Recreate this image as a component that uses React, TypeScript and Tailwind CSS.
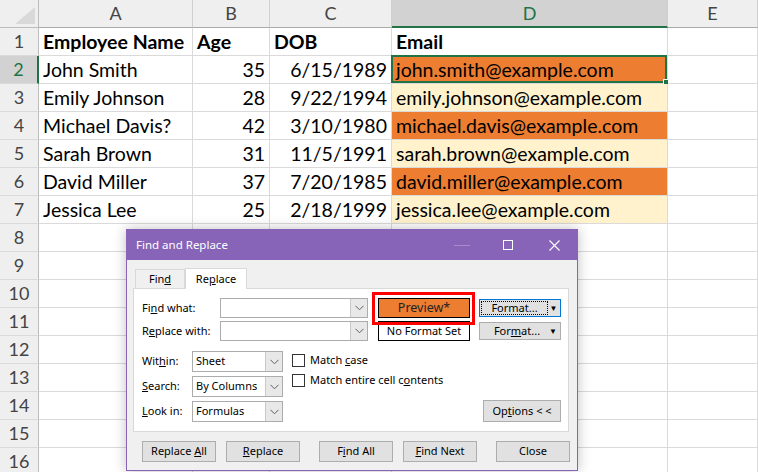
import React from 'react';

const COLS = ['A', 'B', 'C', 'D', 'E'];

const people = [
  { name: 'John Smith', age: '35', dob: '6/15/1989', email: 'john.smith@example.com', fill: 'bg-[#ed7d31]' },
  { name: 'Emily Johnson', age: '28', dob: '9/22/1994', email: 'emily.johnson@example.com', fill: 'bg-[#fff2cc]' },
  { name: 'Michael Davis?', age: '42', dob: '3/10/1980', email: 'michael.davis@example.com', fill: 'bg-[#ed7d31]' },
  { name: 'Sarah Brown', age: '31', dob: '11/5/1991', email: 'sarah.brown@example.com', fill: 'bg-[#fff2cc]' },
  { name: 'David Miller', age: '37', dob: '7/20/1985', email: 'david.miller@example.com', fill: 'bg-[#ed7d31]' },
  { name: 'Jessica Lee', age: '25', dob: '2/18/1999', email: 'jessica.lee@example.com', fill: 'bg-[#fff2cc]' },
];

const cell = 'border-r border-b border-[#dadada] flex items-center overflow-hidden whitespace-nowrap';

function RowHead({ n, active }: { n: number; active?: boolean }) {
  return (
    <div
      className={`flex items-center justify-center border-b border-[#dadada] text-[18px] ${
        active ? 'bg-[#d2d2d2] text-[#217346] border-r-2 border-r-[#217346]' : 'bg-[#efefef] text-[#444] border-r border-r-[#bdbdbd]'
      }`}
    >
      {n}
    </div>
  );
}

function Sheet() {
  return (
    <div className="grid grid-cols-[39px_154px_77px_122px_276px_90px] auto-rows-[28px] bg-white text-[19.5px] font-['Lato',sans-serif] text-black">
      {/* corner */}
      <div className="relative bg-[#efefef] border-r border-b border-[#bdbdbd]">
        <svg className="absolute right-[3px] bottom-[3px]" width="20" height="17" viewBox="0 0 20 17">
          <polygon points="0,17 20,17 20,0" fill="#d9d9d9" />
        </svg>
      </div>
      {COLS.map((c) => (
        <div
          key={c}
          className={`flex items-center justify-center border-r border-[#cfcfcf] text-[18px] ${
            c === 'D' ? 'bg-[#d2d2d2] text-[#217346] border-b-2 border-b-[#217346]' : 'bg-[#efefef] text-[#444] border-b border-b-[#ababab]'
          }`}
        >
          {c}
        </div>
      ))}

      <RowHead n={1} />
      <div className={`${cell} pl-[4px] font-bold`}>Employee Name</div>
      <div className={`${cell} pl-[4px] font-bold`}>Age</div>
      <div className={`${cell} pl-[4px] font-bold`}>DOB</div>
      <div className={`${cell} pl-[4px] font-bold`}>Email</div>
      <div className={cell} />

      {people.map((p, i) => (
        <React.Fragment key={p.name}>
          <RowHead n={i + 2} active={i === 0} />
          <div className={`${cell} pl-[4px]`}>{p.name}</div>
          <div className={`${cell} justify-end pr-[4px]`}>{p.age}</div>
          <div className={`${cell} justify-end pr-[4px]`}>{p.dob}</div>
          <div className={`${cell} ${p.fill} pl-[4px] relative overflow-visible`}>
            {p.email}
            {i === 0 && (
              <div className="absolute -left-[1px] -top-[1px] right-0 bottom-0 border-2 border-[#217346]">
                <div className="absolute -right-[4px] -bottom-[4px] w-[6px] h-[6px] bg-[#217346] border border-white" />
              </div>
            )}
          </div>
          <div className={cell} />
        </React.Fragment>
      ))}

      {Array.from({ length: 9 }, (_, i) => (
        <React.Fragment key={i}>
          <RowHead n={i + 8} />
          {COLS.map((c) => (
            <div key={c} className={cell} />
          ))}
        </React.Fragment>
      ))}
    </div>
  );
}

function Btn({ children, className = '' }: { children: React.ReactNode; className?: string }) {
  return (
    <div className={`h-[21px] w-[74px] flex items-center justify-center bg-[#e1e1e1] border border-[#adadad] ${className}`}>
      <span>{children}</span>
    </div>
  );
}

function Chevron() {
  return (
    <svg width="9" height="6" viewBox="0 0 9 6">
      <path d="M0.5 0.8 L4.5 4.8 L8.5 0.8" fill="none" stroke="#606060" strokeWidth="1" />
    </svg>
  );
}

function Combo({ value, w, h = 20 }: { value?: string; w: number; h?: number }) {
  return (
    <div className="flex bg-white border border-[#acacac]" style={{ width: w, height: h }}>
      <div className="flex-1 flex items-center pl-[3px]">{value}</div>
      <div className="w-[17px] flex items-center justify-center bg-[#e8e8e8] border-l border-[#c9c9c9]">
        <Chevron />
      </div>
    </div>
  );
}

function Check({ children }: { children: React.ReactNode }) {
  return (
    <div className="h-[20px] flex items-center gap-[5px]">
      <div className="w-[13px] h-[13px] bg-white border border-[#333]" />
      <span>{children}</span>
    </div>
  );
}

function Dialog() {
  return (
    <div className="absolute left-[126px] top-[229px] w-[452px] h-[242px] border border-[#8764b8] bg-[#f0f0f0] shadow-[0_0_12px_rgba(0,0,0,0.25)] font-['Noto_Sans',sans-serif] text-[11px] text-black flex flex-col">
      {/* title bar */}
      <div className="h-[30px] flex items-center bg-[#8764b8] text-white text-[11.5px] pl-[9px]">
        <span>Find and Replace</span>
        <div className="ml-auto flex h-full">
          <div className="w-[46px] flex items-center justify-center">
            <div className="w-[16px] h-px bg-[#a48fcb]" />
          </div>
          <div className="w-[46px] flex items-center justify-center">
            <div className="w-[10px] h-[10px] border border-white" />
          </div>
          <div className="w-[46px] flex items-center justify-center">
            <svg width="11" height="11" viewBox="0 0 11 11">
              <path d="M0.5 0.5 L10.5 10.5 M10.5 0.5 L0.5 10.5" stroke="#fff" strokeWidth="1.1" />
            </svg>
          </div>
        </div>
      </div>

      <div className="pl-[6px] pr-[8px] pt-[8px]">
        {/* tabs */}
        <div className="h-[20px] flex items-end ml-[2px]">
          <div className="h-[19px] w-[50px] flex items-center justify-center border border-b-0 border-[#d9d9d9] bg-[#f0f0f0]">
            <span>
              Fin<u>d</u>
            </span>
          </div>
          <div className="h-[21px] w-[62px] -mb-px relative z-10 flex items-center justify-center border border-b-0 border-[#d9d9d9] bg-white">
            <span>
              Re<u>p</u>lace
            </span>
          </div>
        </div>

        {/* panel */}
        <div className="h-[144px] bg-white border border-[#d9d9d9] pt-[9px] pl-[8px] pr-[7px] pb-[9px] flex flex-col">
          <div className="flex">
            <div className="flex flex-col gap-[3px]">
              <div className="flex items-center">
                <span className="w-[78px]">
                  Fi<u>n</u>d what:
                </span>
                <Combo w={148} />
              </div>
              <div className="flex items-center">
                <span className="w-[78px]">
                  R<u>e</u>place with:
                </span>
                <Combo w={148} />
              </div>
            </div>
            <div className="ml-[10px] flex flex-col gap-[3px]">
              <div className="relative w-[92px] h-[20px] bg-[#ed7d31] border border-black flex items-center justify-center text-[12.5px] text-[#222]">
                Preview*
                <div className="absolute -left-[7px] -top-[7px] -right-[6px] -bottom-[8px] border-[3px] border-[#ff0000]" />
              </div>
              <div className="w-[92px] h-[20px] bg-white border border-black flex items-center justify-center">
                No Format Set
              </div>
            </div>
            <div className="ml-[9px] flex flex-col gap-[5px] pt-px">
              <div className="w-[82px] h-[18px] bg-[#e1e1e1] border border-[#0078d7] flex p-[1px]">
                <div className="flex-1 flex items-center justify-center border border-dotted border-black">Format...</div>
                <div className="w-[11px] flex items-center justify-center text-[8px]">▼</div>
              </div>
              <div className="w-[82px] h-[18px] bg-[#e1e1e1] border border-[#adadad] flex">
                <div className="flex-1 flex items-center justify-center pl-[8px]">
                  <span>
                    For<u>m</u>at...
                  </span>
                </div>
                <div className="w-[14px] flex items-center justify-center text-[8px]">▼</div>
              </div>
            </div>
          </div>

          <div className="flex mt-[10px] flex-1">
            <div className="flex flex-col gap-[4px]">
              <div className="flex items-center">
                <span className="w-[50px]">
                  Wit<u>h</u>in:
                </span>
                <Combo w={91} h={21} value="Sheet" />
              </div>
              <div className="flex items-center">
                <span className="w-[50px]">
                  <u>S</u>earch:
                </span>
                <Combo w={91} h={21} value="By Columns" />
              </div>
              <div className="flex items-center">
                <span className="w-[50px]">
                  <u>L</u>ook in:
                </span>
                <Combo w={91} h={21} value="Formulas" />
              </div>
            </div>
            <div className="ml-[9px] flex flex-col -mt-[1px]">
              <Check>
                Match <u>c</u>ase
              </Check>
              <Check>
                Match entire cell c<u>o</u>ntents
              </Check>
            </div>
            <div className="ml-auto self-end h-[22px] w-[78px] flex items-center justify-center bg-[#e1e1e1] border border-[#adadad]">
              <span>
                Op<u>t</u>ions &lt; &lt;
              </span>
            </div>
          </div>
        </div>
      </div>

      {/* bottom buttons */}
      <div className="flex mt-[9px] pl-[15px]">
        <Btn>
          Replace <u>A</u>ll
        </Btn>
        <Btn className="ml-[10px]">
          <u>R</u>eplace
        </Btn>
        <Btn className="ml-[19px]">
          F<u>i</u>nd All
        </Btn>
        <Btn className="ml-[10px]">
          <u>F</u>ind Next
        </Btn>
        <Btn className="ml-[19px]">Close</Btn>
      </div>
    </div>
  );
}

export default function App() {
  return (
    <div className="relative w-[758px] h-[472px] overflow-hidden bg-white">
      <Sheet />
      <Dialog />
    </div>
  );
}
